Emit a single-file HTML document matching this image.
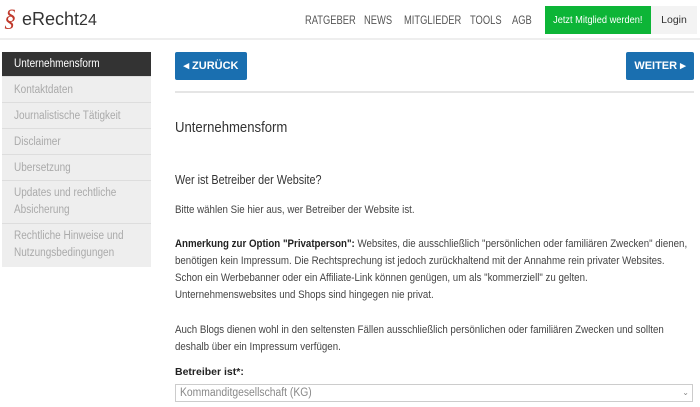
<!DOCTYPE html>
<html><head><meta charset="utf-8"><style>
*{margin:0;padding:0;box-sizing:border-box}
body{width:700px;height:407px;overflow:hidden;background:#fff;font-family:"Liberation Sans",sans-serif;color:#333;position:relative}
.a{position:absolute;white-space:nowrap}
.s{display:inline-block;transform-origin:0 0}
.hdr{left:0;top:0;width:700px;height:40px;border-bottom:2px solid #eee}
.nav{top:13px;font-size:12px;color:#555;transform:scaleX(0.78);transform-origin:0 0}
.side{left:2px;width:149px;background:#eee;font-size:11.5px;color:#aaa;border-bottom:1px solid #ddd;padding-left:12px;line-height:17px}
.side .s{transform:scaleX(0.87)}
.btn{background:#1a6fb0;color:#fff;font-weight:bold;font-size:11px;border-radius:2px;text-align:center;line-height:28px;height:28px;top:52px}
.p{left:175px;font-size:11.3px;color:#444;line-height:17px;transform:scaleX(0.86);transform-origin:0 0}
</style></head><body>
<div class="a hdr"></div>
<div class="a" style="left:4px;top:6px;font-size:24px;color:#c0392b;font-style:italic;font-family:'Liberation Serif',serif">§</div>
<div class="a" style="left:22px;top:9px;font-size:18px;color:#333">eRecht<span style="font-size:16px">24</span></div>
<div class="a nav" style="left:305px">RATGEBER</div>
<div class="a nav" style="left:364px">NEWS</div>
<div class="a nav" style="left:404px">MITGLIEDER</div>
<div class="a nav" style="left:470px">TOOLS</div>
<div class="a nav" style="left:512px">AGB</div>
<div class="a" style="left:545px;top:6px;width:106px;height:28px;background:#0db537;color:#fff;font-size:10.5px;line-height:28px;text-align:center"><span class="s" style="transform:scaleX(0.88);transform-origin:50% 0">Jetzt Mitglied werden!</span></div>
<div class="a" style="left:651px;top:6px;width:46px;height:28px;background:#f3f3f3;color:#333;font-size:10.5px;line-height:28px;text-align:center">Login</div>

<div class="a side" style="top:52px;height:25px;background:#333;color:#fff;line-height:25px"><span class="s">Unternehmensform</span></div>
<div class="a side" style="top:77px;height:26px;line-height:26px"><span class="s">Kontaktdaten</span></div>
<div class="a side" style="top:103px;height:26px;line-height:26px"><span class="s">Journalistische Tätigkeit</span></div>
<div class="a side" style="top:129px;height:26px;line-height:26px"><span class="s">Disclaimer</span></div>
<div class="a side" style="top:155px;height:26px;line-height:26px"><span class="s">Übersetzung</span></div>
<div class="a side" style="top:181px;height:43px;padding-top:4px"><span class="s">Updates und rechtliche<br>Absicherung</span></div>
<div class="a side" style="top:224px;height:43px;padding-top:4px;border-bottom:none"><span class="s">Rechtliche Hinweise und<br>Nutzungsbedingungen</span></div>

<div class="a btn" style="left:175px;width:72px">◂ ZURÜCK</div>
<div class="a btn" style="left:626px;width:68px">WEITER ▸</div>
<div class="a" style="left:175px;top:91px;width:519px;height:2px;background:#e5e5e5"></div>

<div class="a" style="left:175px;top:119px;font-size:15px;color:#333;transform:scaleX(0.875);transform-origin:0 0">Unternehmensform</div>
<div class="a" style="left:175px;top:172px;font-size:13px;color:#333;transform:scaleX(0.83);transform-origin:0 0">Wer ist Betreiber der Website?</div>
<div class="a p" style="top:202px">Bitte wählen Sie hier aus, wer Betreiber der Website ist.</div>
<div class="a p" style="top:236px"><b style="color:#222">Anmerkung zur Option "Privatperson":</b> Websites, die ausschließlich "persönlichen oder familiären Zwecken" dienen,<br>benötigen kein Impressum. Die Rechtsprechung ist jedoch zurückhaltend mit der Annahme rein privater Websites.<br>Schon ein Werbebanner oder ein Affiliate-Link können genügen, um als "kommerziell" zu gelten.<br>Unternehmenswebsites und Shops sind hingegen nie privat.</div>
<div class="a p" style="top:322px">Auch Blogs dienen wohl in den seltensten Fällen ausschließlich persönlichen oder familiären Zwecken und sollten<br>deshalb über ein Impressum verfügen.</div>
<div class="a" style="left:175px;top:366px;font-size:10.5px;font-weight:bold;color:#222">Betreiber ist*:</div>
<div class="a" style="left:175px;top:384px;width:518px;height:18px;border:1px solid #ccc;font-size:11.5px;color:#888;line-height:16px;padding-left:4px"><span class="s" style="transform:scaleX(0.9)">Kommanditgesellschaft (KG)</span><span style="position:absolute;right:3px;top:0;font-size:8px">⌄</span></div>
</body></html>
